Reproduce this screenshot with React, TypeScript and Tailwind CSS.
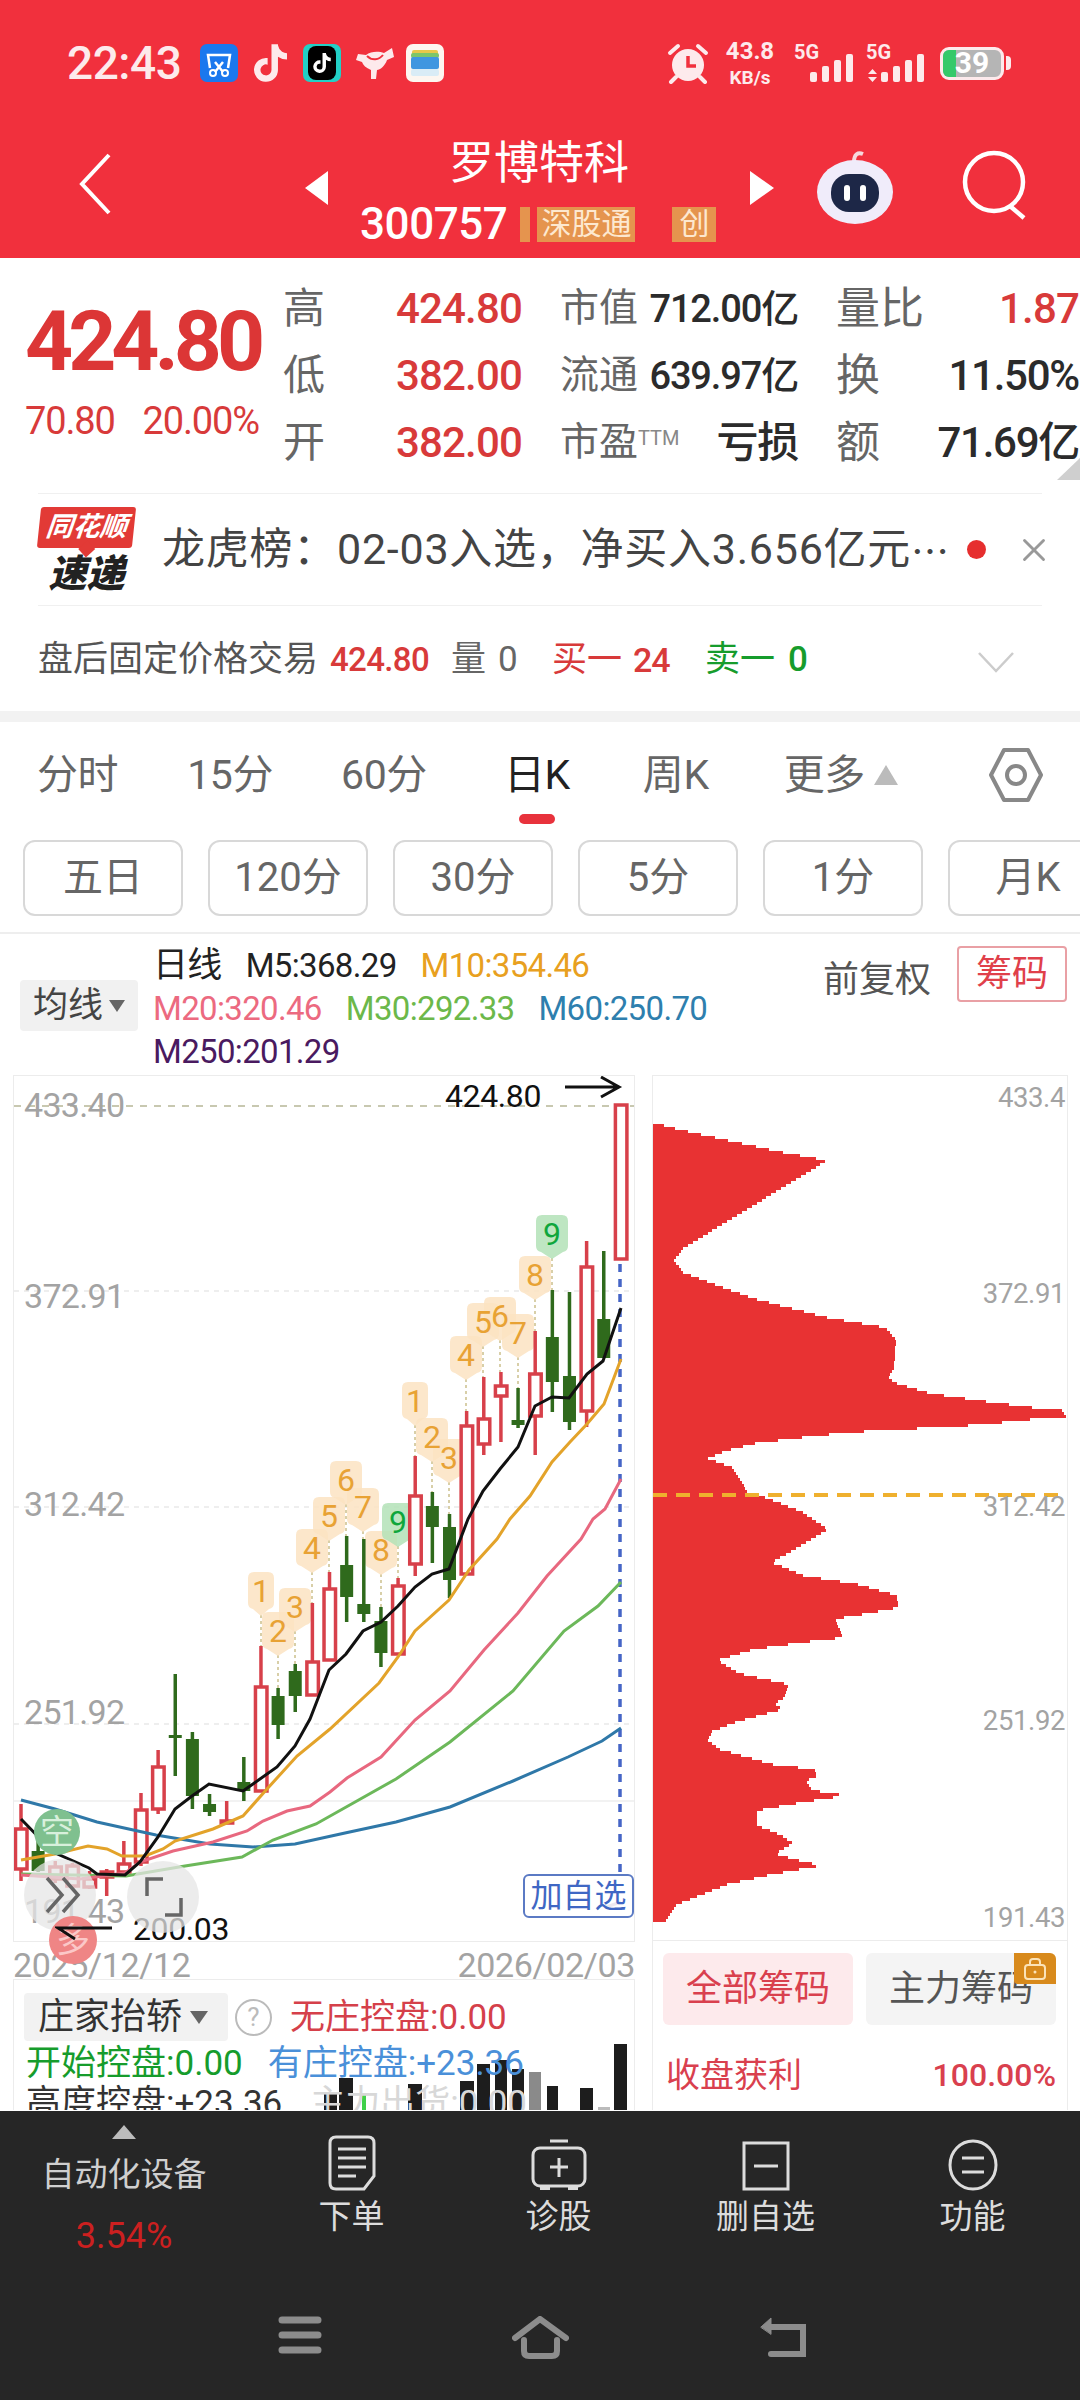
import React from 'react';
import { X } from 'lucide-react';
import { FaTiktok } from 'react-icons/fa6';

type Candle = { hi: number; lo: number; top: number; bot: number; up: boolean };

// hi, lo, body top, body bottom, all in page pixels
const candles: Candle[] = [
  { hi: 1805, lo: 1882, top: 1830, bot: 1870, up: true },
  { hi: 1842, lo: 1873, top: 1852, bot: 1872, up: false },
  { hi: 1862, lo: 1884, top: 1868, bot: 1880, up: true },
  { hi: 1864, lo: 1890, top: 1867, bot: 1887, up: true },
  { hi: 1872, lo: 1890, top: 1880, bot: 1888, up: true },
  { hi: 1870, lo: 1897, top: 1873, bot: 1878, up: true },
  { hi: 1842, lo: 1873, top: 1865, bot: 1873, up: true },
  { hi: 1794, lo: 1867, top: 1811, bot: 1863, up: true },
  { hi: 1751, lo: 1815, top: 1768, bot: 1810, up: true },
  { hi: 1675, lo: 1777, top: 1736, bot: 1739, up: false },
  { hi: 1733, lo: 1810, top: 1740, bot: 1797, up: false },
  { hi: 1795, lo: 1817, top: 1805, bot: 1813, up: false },
  { hi: 1802, lo: 1825, top: 1822, bot: 1824, up: true },
  { hi: 1758, lo: 1802, top: 1783, bot: 1792, up: false },
  { hi: 1647, lo: 1792, top: 1688, bot: 1792, up: true },
  { hi: 1689, lo: 1740, top: 1697, bot: 1726, up: false },
  { hi: 1665, lo: 1713, top: 1672, bot: 1697, up: false },
  { hi: 1604, lo: 1696, top: 1663, bot: 1696, up: true },
  { hi: 1573, lo: 1661, top: 1590, bot: 1661, up: true },
  { hi: 1537, lo: 1623, top: 1566, bot: 1598, up: false },
  { hi: 1540, lo: 1623, top: 1605, bot: 1615, up: false },
  { hi: 1608, lo: 1668, top: 1622, bot: 1654, up: false },
  { hi: 1579, lo: 1655, top: 1587, bot: 1655, up: true },
  { hi: 1457, lo: 1577, top: 1497, bot: 1565, up: true },
  { hi: 1493, lo: 1564, top: 1507, bot: 1528, up: false },
  { hi: 1515, lo: 1599, top: 1528, bot: 1581, up: false },
  { hi: 1412, lo: 1575, top: 1427, bot: 1575, up: true },
  { hi: 1378, lo: 1456, top: 1420, bot: 1445, up: true },
  { hi: 1373, lo: 1443, top: 1387, bot: 1397, up: true },
  { hi: 1389, lo: 1429, top: 1421, bot: 1426, up: false },
  { hi: 1332, lo: 1456, top: 1375, bot: 1417, up: true },
  { hi: 1291, lo: 1413, top: 1338, bot: 1383, up: false },
  { hi: 1293, lo: 1431, top: 1377, bot: 1423, up: false },
  { hi: 1242, lo: 1428, top: 1268, bot: 1412, up: true },
  { hi: 1252, lo: 1359, top: 1320, bot: 1359, up: false },
  { hi: 1106, lo: 1260, top: 1106, bot: 1260, up: true },
];

const candleX = (i: number) => 21 + i * 17.14;

const ma5 = '21,1820 53,1853 89,1869 97,1875 125,1876 140,1863 158,1838 175,1810 192,1797 209,1785 243,1792 277,1768 295,1747 310,1720 329,1671 346,1655 363,1632 381,1623 398,1607 415,1588 432,1575 449,1570 468,1520 483,1492 500,1470 518,1448 535,1407 552,1398 569,1399 587,1375 603,1362 621,1309';
const ma10 = '21,1861 55,1855 88,1847 107,1850 122,1857 145,1857 163,1850 175,1842 213,1830 243,1817 267,1790 297,1757 330,1730 379,1684 398,1658 415,1632 449,1601 469,1571 497,1540 510,1520 530,1497 552,1463 570,1443 587,1425 604,1405 621,1360';
const ma20 = '21,1876 80,1880 125,1874 140,1863 173,1852 213,1843 247,1832 263,1822 287,1812 310,1807 330,1793 347,1779 381,1758 415,1721 450,1692 484,1651 518,1614 547,1577 581,1540 593,1520 605,1510 613,1495 621,1480';
const ma30 = '21,1875 126,1877 185,1867 242,1858 273,1841 316,1825 396,1780 450,1743 513,1692 564,1632 598,1607 621,1583';
const ma60 = '21,1801 55,1810 97,1823 156,1836 210,1845 253,1848 295,1845 345,1834 396,1823 450,1808 513,1782 568,1758 602,1742 621,1729';

// sequence markers sitting above the candles: [digit, centre x, centre y, foot of the dotted leader]
const markers: [number, number, number, number][] = [
  [1, 261, 1592, 1647], [2, 278, 1632, 1689], [3, 295, 1608, 1665], [4, 312, 1549, 1604],
  [5, 329, 1517, 1573], [6, 346, 1481, 1537], [7, 363, 1508, 1540], [8, 381, 1551, 1608],
  [9, 398, 1523, 1579], [1, 415, 1402, 1457], [2, 432, 1438, 1493], [3, 449, 1459, 1515],
  [4, 466, 1356, 1412], [5, 483, 1323, 1378], [6, 500, 1317, 1373], [7, 518, 1334, 1389],
  [8, 535, 1276, 1332], [9, 552, 1235, 1291],
];

// right edge of the chip histogram as [x, y] corners, top to bottom
const chipEdge: [number, number][] = [
  [652, 1122], [683, 1130], [728, 1140], [783, 1152], [827, 1160], [773, 1193], [683, 1248], [674, 1260], [683, 1272],
  [753, 1298], [827, 1317], [885, 1327], [896, 1339], [894, 1368], [888, 1378], [897, 1383], [930, 1393], [993, 1402],
  [1040, 1408], [1062, 1410], [1067, 1417], [1030, 1419], [993, 1423], [943, 1427], [890, 1429], [838, 1433], [793, 1438],
  [755, 1443], [727, 1450], [708, 1458], [732, 1467], [748, 1492], [768, 1498], [803, 1512], [828, 1529], [772, 1562],
  [803, 1575], [858, 1584], [897, 1595], [898, 1607], [852, 1616], [835, 1618], [843, 1637], [802, 1642], [753, 1649],
  [717, 1660], [740, 1673], [788, 1684], [785, 1697], [775, 1703], [782, 1709], [737, 1721], [712, 1731], [708, 1740],
  [720, 1749], [773, 1764], [815, 1769], [816, 1777], [805, 1780], [813, 1790], [846, 1795], [807, 1801], [757, 1810],
  [757, 1825], [780, 1834], [793, 1843], [775, 1853], [795, 1859], [821, 1865], [767, 1875], [727, 1884], [677, 1904],
  [665, 1921],
];

// histogram rows, one whole-pixel bar every 3px, stepped off the edge above
const chipRows: { y: number; w: number }[] = [];
for (let y = 1122; y < 1921; y += 3) {
  let k = 0;
  while (k < chipEdge.length - 2 && chipEdge[k + 1][1] < y) k++;
  const [x0, y0] = chipEdge[k];
  const [x1, y1] = chipEdge[k + 1];
  const x = x0 + ((x1 - x0) * (y - y0)) / (y1 - y0);
  chipRows.push({ y, w: Math.round(x - 653) });
}

// x, width, top of the bar in page pixels
const volumeBars: [number, number, number][] = [
  [324, 13, 2093], [339, 14, 2078], [408, 14, 2084], [460, 14, 2081], [477, 13, 2064],
  [495, 12, 2060], [512, 12, 2069], [529, 12, 2072], [547, 11, 2086], [580, 13, 2088], [614, 13, 2044],
];

function StatusBar() {
  return (
    <div className="flex h-[126px] items-center pl-[67px] text-[#fdeaec]">
      <span className="w-[133px] text-[46px] font-medium leading-none tracking-[-0.01em]">22:43</span>
      <svg width="38" height="38" viewBox="0 0 38 38" className="shrink-0">
        <rect width="38" height="38" rx="7" fill="#1a78ee" />
        <path d="M10 24 L8 11 H30 L28 24" fill="none" stroke="#fff" strokeWidth="2.5" />
        <path d="M15 18 L23 28 M23 18 L15 28" stroke="#fff" strokeWidth="2.5" />
        <circle cx="13" cy="29" r="3" fill="none" stroke="#fff" strokeWidth="2" />
        <circle cx="25" cy="29" r="3" fill="none" stroke="#fff" strokeWidth="2" />
      </svg>
      <FaTiktok className="ml-[16px] h-[40px] w-[33px] shrink-0" />
      <div className="ml-[16px] flex h-[38px] w-[38px] shrink-0 items-center justify-center rounded-[7px] bg-[#22cfc6]">
        <div className="flex h-[34px] w-[28px] items-center justify-center rounded-[8px] bg-black">
          <FaTiktok className="h-[20px] w-[18px] text-white" />
        </div>
      </div>
      <svg width="40" height="36" viewBox="0 0 40 36" className="ml-[14px] shrink-0">
        <path d="M1 15 L3 9 L11 10 C16 6 24 6 29 8 L37 3 L39 12 L32 15 C30 21 25 25 22 25 L21 34 L16 34 L16 25 C11 23 8 20 7 17 Z" fill="#fdeaec" />
        <path d="M12 11 C17 16 24 15 28 10" fill="none" stroke="#f1303d" strokeWidth="2" />
      </svg>
      <svg width="38" height="38" viewBox="0 0 38 38" className="ml-[11px] shrink-0">
        <rect width="38" height="38" rx="7" fill="#fdf6f0" />
        <rect x="6" y="6" width="26" height="5" rx="2" fill="#e8c74a" />
        <rect x="5" y="9" width="28" height="5" rx="2" fill="#7cc66a" />
        <rect x="5" y="13" width="28" height="12" rx="2" fill="#3f96e0" />
        <rect x="5" y="25" width="28" height="7" rx="2" fill="#d9ecf6" />
      </svg>

      <svg width="42" height="42" viewBox="0 0 42 42" className="ml-[223px] shrink-0">
        <circle cx="21" cy="23" r="16" fill="#fdeaec" />
        <path d="M21 14 V24 H29" fill="none" stroke="#f1303d" strokeWidth="3.500" />
        <path d="M3 11 L11 4 M39 11 L31 4" stroke="#fdeaec" strokeWidth="4" strokeLinecap="round" />
        <path d="M9 35 L4 40 M33 35 L38 40" stroke="#fdeaec" strokeWidth="4" strokeLinecap="round" />
      </svg>
      <div className="ml-[16px] flex w-[50px] flex-col items-center font-bold leading-none">
        <span className="text-[24px]">43.8</span>
        <span className="mt-[5px] text-[19px]">KB/s</span>
      </div>
      <div className="relative ml-[19px] h-[42px] w-[60px]">
        <span className="absolute left-0 top-0 text-[20px] font-bold leading-none">5G</span>
        <svg width="44" height="28" viewBox="0 0 44 28" className="absolute left-[16px] top-[12px]" fill="currentColor">
          <rect x="0" y="18" width="7" height="10" rx="2" />
          <rect x="12" y="12" width="7" height="16" rx="2" />
          <rect x="24" y="6" width="7" height="22" rx="2" />
          <rect x="36" y="0" width="7" height="28" rx="2" />
        </svg>
      </div>
      <div className="relative ml-[12px] h-[42px] w-[62px]">
        <span className="absolute left-0 top-0 text-[20px] font-bold leading-none">5G</span>
        <svg width="60" height="28" viewBox="0 0 60 28" className="absolute left-[2px] top-[12px]" fill="currentColor">
          <path d="M4.500 15 L9 20 H0 Z M4.500 28 L0 23 H9 Z" />
          <rect x="13" y="18" width="7" height="10" rx="2" />
          <rect x="25" y="12" width="7" height="16" rx="2" />
          <rect x="37" y="6" width="7" height="22" rx="2" />
          <rect x="49" y="0" width="7" height="28" rx="2" />
        </svg>
      </div>
      <div className="relative ml-[12px] flex h-[33px] w-[64px] items-center justify-center overflow-hidden rounded-[9px] border-[3px] border-[#fdeaec] bg-[#b5b5b5]">
        <div className="absolute inset-y-0 left-0 w-[13px] bg-[#35c96a]" />
        <span className="relative text-[30px] font-bold leading-none text-white">39</span>
      </div>
      <div className="ml-[2px] h-[14px] w-[5px] rounded-r-[4px] bg-[#fdeaec]" />
    </div>
  );
}

function TitleBar() {
  return (
    <div className="flex h-[132px] items-center text-white">
      <svg width="34" height="62" viewBox="0 0 34 62" className="ml-[78px] shrink-0 -translate-y-[8px]">
        <path d="M31 2 L4 31 L31 60" fill="none" stroke="#fff" strokeWidth="4" />
      </svg>
      <svg width="23" height="34" viewBox="0 0 23 34" className="ml-[193px] shrink-0 -translate-y-[4px]">
        <path d="M23 0 V34 L0 17 Z" fill="#fff" />
      </svg>
      <div className="flex w-[422px] flex-col items-center">
        <span className="-translate-y-[3px] text-[45px] leading-[50px]">罗博特科</span>
        <div className="mt-[14px] flex h-[36px] items-center self-start pl-[32px]">
          <span className="text-[44px] font-medium leading-none tracking-[-0.01em]">300757</span>
          <span className="ml-[13px] h-[35px] w-[10px] bg-[#e5944e]" />
          <span className="ml-[7px] flex h-[35px] w-[98px] items-center justify-center bg-[#e5944e] text-[30px] leading-none text-[#fde8d0]">深股通</span>
          <span className="ml-[37px] flex h-[35px] w-[44px] items-center justify-center bg-[#e5944e] text-[30px] leading-none text-[#fde8d0]">创</span>
        </div>
      </div>
      <svg width="24" height="34" viewBox="0 0 24 34" className="shrink-0 -translate-y-[4px]">
        <path d="M0 0 V34 L24 17 Z" fill="#fff" />
      </svg>
      <svg width="82" height="76" viewBox="0 0 82 76" className="ml-[40px] shrink-0 -translate-y-[6px]">
        <path d="M40 14 C40 6 44 4 49 6" fill="none" stroke="#f6d8dc" strokeWidth="4" />
        <ellipse cx="41" cy="44" rx="38" ry="32" fill="#f0ecfa" />
        <rect x="17" y="26" width="48" height="38" rx="18" fill="#1d2747" />
        <rect x="30" y="37" width="6" height="16" rx="3" fill="#fff" />
        <rect x="46" y="37" width="6" height="16" rx="3" fill="#fff" />
      </svg>
      <svg width="70" height="70" viewBox="0 0 70 70" className="ml-[66px] shrink-0 -translate-y-[7px]">
        <circle cx="32" cy="32" r="29" fill="none" stroke="#fff" strokeWidth="4.500" />
        <path d="M48 56 L62 68" stroke="#fff" strokeWidth="4.500" />
      </svg>
    </div>
  );
}

function QuoteCell({ label, value, labelClass, valueClass }: { label: React.ReactNode; value: string; labelClass: string; valueClass: string }) {
  return (
    <div className="flex items-center justify-between whitespace-nowrap">
      <span className={labelClass}>{label}</span>
      <span className={valueClass}>{value}</span>
    </div>
  );
}

const labelOne = 'text-[42px] leading-none text-[#666]';
const labelTwo = 'text-[39px] leading-none text-[#666]';
const labelThree = 'text-[44px] leading-none text-[#666]';
const redValue = 'text-[42px] font-medium leading-none tracking-[-0.02em] text-[#d83a3a]';
const darkValue = 'text-[38px] font-medium leading-none tracking-[-0.03em] text-[#2b2b2b]';
const darkWide = 'text-[42px] font-medium leading-none tracking-[-0.03em] text-[#2b2b2b]';

function QuotePanel() {
  return (
    <section className="relative flex h-[235px] bg-white">
      <div className="flex w-[283px] shrink-0 flex-col pl-[25px]">
        <span className="mt-[46px] text-[84px] font-bold leading-[76px] tracking-[-0.06em] text-[#dc3636]">424.80</span>
        <div className="mt-[22px] flex w-[234px] justify-between text-[38px] leading-none tracking-[-0.03em] text-[#d83a3a]">
          <span>70.80</span>
          <span>20.00%</span>
        </div>
      </div>
      <div className="mt-[17px] grid h-[201px] grid-cols-[239px_238px_243px] grid-rows-3 gap-x-[38px]">
        <QuoteCell label="高" value="424.80" labelClass={labelOne} valueClass={redValue} />
        <QuoteCell label="市值" value="712.00亿" labelClass={labelTwo} valueClass={darkValue} />
        <QuoteCell label="量比" value="1.87" labelClass={labelThree} valueClass={redValue} />
        <QuoteCell label="低" value="382.00" labelClass={labelOne} valueClass={redValue} />
        <QuoteCell label="流通" value="639.97亿" labelClass={labelTwo} valueClass={darkValue} />
        <QuoteCell label="换" value="11.50%" labelClass={labelThree} valueClass={darkWide} />
        <QuoteCell label="开" value="382.00" labelClass={labelOne} valueClass={redValue} />
        <QuoteCell
          label={<>市盈<sup className="text-[20px] text-[#888]">TTM</sup></>}
          value="亏损"
          labelClass={labelTwo}
          valueClass={darkWide}
        />
        <QuoteCell label="额" value="71.69亿" labelClass={labelThree} valueClass={darkWide} />
      </div>
      <svg width="25" height="22" viewBox="0 0 25 22" className="absolute bottom-[13px] right-0">
        <path d="M25 0 V22 H2 Z" fill="#cfcfcf" />
      </svg>
    </section>
  );
}

function NewsRow() {
  return (
    <div className="mx-[38px] flex h-[113px] items-center border-y border-[#f0f0f0]">
      <div className="flex w-[97px] shrink-0 flex-col items-center">
        <div className="relative flex h-[41px] w-[95px] -skew-x-6 items-center justify-center rounded-[3px] bg-[#e23a36]">
          <span className="text-[27px] font-bold italic leading-none text-white">同花顺</span>
          <div className="absolute -bottom-[7px] left-[44px] h-[12px] w-[12px] rotate-45 bg-[#e23a36]" />
        </div>
        <span className="mt-[7px] text-[38px] font-black italic leading-none text-[#222]">速递</span>
      </div>
      <span className="ml-[27px] flex w-[785px] items-center whitespace-nowrap text-[43px] leading-none tracking-[0.75px] text-[#444]">
        龙虎榜：02-03入选，净买入3.656亿元
        <span className="font-['Noto_Sans_CJK_SC'] text-[38px]" lang="zh-CN">…</span>
      </span>
      <div className="ml-[20px] h-[19px] w-[19px] shrink-0 rounded-full bg-[#e62e2e]" />
      <X className="ml-[29px] h-[38px] w-[38px] shrink-0 text-[#999]" strokeWidth={1.8} />
    </div>
  );
}

function AfterHoursRow() {
  return (
    <div className="relative flex h-[105px] items-center whitespace-nowrap pl-[38px] pt-[2px] text-[35px] leading-none">
      <span className="text-[#555]">盘后固定价格交易</span>
      <span className="ml-[12px] w-[95px] text-[33px] font-medium tracking-[-0.02em] text-[#d83a3a]">424.80</span>
      <span className="ml-[26px] w-[35px] text-[#666]">量</span>
      <span className="ml-[12px] w-[18px] text-[#666]">0</span>
      <span className="ml-[36px] w-[71px] text-[#d83a3a]">买一</span>
      <span className="ml-[10px] w-[36px] text-[34px] font-medium tracking-[-0.03em] text-[#d83a3a]">24</span>
      <span className="ml-[36px] w-[71px] text-[#169c2c]">卖一</span>
      <span className="ml-[12px] font-medium text-[#169c2c]">0</span>
      <svg width="38" height="22" viewBox="0 0 38 22" className="absolute left-[977px] top-[45px]">
        <path d="M2 2 L19 20 L36 2" fill="none" stroke="#ccc" strokeWidth="2.500" />
      </svg>
    </div>
  );
}

function PeriodTabs() {
  return (
    <div className="relative flex h-[118px] items-center pb-[12px]">
      <div className="flex pl-[37px] text-[41px] leading-none tracking-[-0.01em] text-[#666]">
        <span>分时</span>
        <span className="ml-[69px]">15分</span>
        <span className="ml-[68px]">60分</span>
        <span className="ml-[77px] text-[#222]">日K</span>
        <span className="ml-[73px]">周K</span>
        <span className="ml-[75px]">更多</span>
      </div>
      <div className="ml-[9px] h-0 w-0 border-x-[12px] border-b-[20px] border-x-transparent border-b-[#bbb]" />
      <svg width="54" height="56" viewBox="0 0 54 56" className="ml-auto mr-[37px]">
        <path d="M15 3 H39 L52 28 L39 53 H15 L2 28 Z" fill="none" stroke="#888" strokeWidth="4" strokeLinejoin="round" />
        <circle cx="27" cy="28" r="9" fill="none" stroke="#888" strokeWidth="4" />
      </svg>
      <div className="absolute bottom-[16px] left-[519px] h-[10px] w-[36px] rounded-full bg-[#e8323c]" />
    </div>
  );
}

function RangeButtons() {
  const items = ['五日', '120分', '30分', '5分', '1分', '月K'];
  return (
    <div className="flex h-[94px] gap-[25px] border-b-2 border-[#eeeeee] pl-[23px] pb-[18px]">
      {items.map((t) => (
        <div key={t} className="flex h-[76px] w-[160px] shrink-0 items-center justify-center rounded-[12px] border-2 border-[#d8d8d8] text-[40px] leading-none text-[#666]">
          {t}
        </div>
      ))}
    </div>
  );
}

function LegendRow() {
  return (
    <div className="relative flex h-[141px] items-start whitespace-nowrap">
      <div className="ml-[20px] mt-[46px] flex h-[51px] w-[118px] items-center justify-center gap-[6px] rounded-[4px] bg-[#f1f1f1] text-[35px] leading-none text-[#444]">
        均线
        <div className="h-0 w-0 border-x-[8px] border-t-[12px] border-x-transparent border-t-[#666]" />
      </div>
      <div className="ml-[15px] mt-[10px] flex flex-col text-[33px] leading-[43px] tracking-[-0.02em]">
        <div className="flex gap-[24px] text-[#222]">
          <span className="text-[35px]">日线</span>
          <span>M5:368.29</span>
          <span className="text-[#e8a020]">M10:354.46</span>
        </div>
        <div className="flex gap-[24px]">
          <span className="text-[#ec6a80]">M20:320.46</span>
          <span className="text-[#6cb84a]">M30:292.33</span>
          <span className="text-[#2e7fae]">M60:250.70</span>
        </div>
        <span className="text-[#4a1a60]">M250:201.29</span>
      </div>
      <span className="absolute left-[823px] top-[26px] text-[36px] leading-[40px] text-[#555]">前复权</span>
      <div className="absolute left-[957px] top-[12px] flex h-[56px] w-[110px] items-center justify-center rounded-[4px] border-2 border-[#e9a0a5] text-[36px] leading-none text-[#e0404a]">
        筹码
      </div>
    </div>
  );
}

function Bubble({ n, x, y, foot }: { n: number; x: number; y: number; foot: number }) {
  const half = n === 1 ? 13 : 16;
  return (
    <g>
      <line x1={x} y1={y + 24} x2={x} y2={foot} stroke="#d8cfa8" strokeWidth="2" strokeDasharray="3 3" />
      <path
        d={`M${x - half + 6} ${y - 19} H${x + half - 6} Q${x + half} ${y - 19} ${x + half} ${y - 13} V${y + 12} Q${x + half} ${y + 17} ${x + half - 5} ${y + 18} L${x} ${y + 25} L${x - half + 5} ${y + 18} Q${x - half} ${y + 17} ${x - half} ${y + 12} V${y - 13} Q${x - half} ${y - 19} ${x - half + 6} ${y - 19} Z`}
        fill={n === 9 ? '#b3e2b7' : '#fce3c2'}
        fillOpacity={0.85}
      />
    </g>
  );
}

function KLineChart() {
  return (
    <svg width="620" height="865" viewBox="14 1077 620 865" className="block overflow-hidden">
      <line x1="14" y1="1107" x2="634" y2="1107" stroke="#c8c8b0" strokeWidth="2" strokeDasharray="7 7" />
      {[1292, 1508, 1725].map((y) => (
        <line key={y} x1="14" y1={y} x2="634" y2={y} stroke="#eeeeee" strokeWidth="2" strokeDasharray="5 5" />
      ))}
      <line x1="14" y1="1802" x2="634" y2="1802" stroke="#f2f2f2" strokeWidth="2" />
      {[['433.40', 1118], ['372.91', 1309], ['312.42', 1517], ['251.92', 1725], ['191.43', 1924]].map(([t, y]) => (
        <text key={t} x="24" y={y} fontSize="34" letterSpacing="-0.7" fill="#a3a3a3">{t}</text>
      ))}

      {markers.map(([n, x, y, foot], i) => (
        <Bubble key={i} n={n} x={x} y={y} foot={foot} />
      ))}
      {markers.map(([n, x, y], i) => (
        <text key={i} x={x} y={y + 11} textAnchor="middle" fontSize="32" fill={n === 9 ? '#0fa63c' : '#e8a234'}>{n}</text>
      ))}

      {candles.map((c, i) => {
        const x = candleX(i);
        const color = c.up ? '#d7404a' : '#2f6a1c';
        return (
          <g key={i}>
            <line x1={x} y1={c.hi} x2={x} y2={c.lo} stroke={color} strokeWidth="3.500" />
            {c.up ? (
              <rect x={x - 5.5} y={c.top} width="11.500" height={c.bot - c.top} fill="#fff" stroke={color} strokeWidth="3.500" />
            ) : (
              <rect x={x - 6.5} y={c.top} width="13" height={c.bot - c.top} fill={color} />
            )}
          </g>
        );
      })}

      <line x1="620" y1="1265" x2="620" y2="1875" stroke="#4565c6" strokeWidth="3.500" strokeDasharray="8 7" />
      <polyline points={ma60} fill="none" stroke="#2f78a8" strokeWidth="3" />
      <polyline points={ma30} fill="none" stroke="#6cb85a" strokeWidth="3" />
      <polyline points={ma20} fill="none" stroke="#e8687f" strokeWidth="3" />
      <polyline points={ma10} fill="none" stroke="#e3a32a" strokeWidth="3" />
      <polyline points={ma5} fill="none" stroke="#111" strokeWidth="3" />
      <path d="M606 1908 L621 1903" stroke="#4a1a60" strokeWidth="3" />

      <text x="445" y="1108" fontSize="32" letterSpacing="-0.4" fill="#111">424.80</text>
      <path d="M565 1088 H619 M601 1078 L619 1088 L601 1098" fill="none" stroke="#111" strokeWidth="3" />
      <text x="133" y="1941" fontSize="32" letterSpacing="-0.4" fill="#111">200.03</text>
    </svg>
  );
}

function ChartOverlays() {
  return (
    <>
      <div className="absolute left-[20px] top-[733px] flex h-[46px] w-[46px] items-center justify-center rounded-full bg-[#7fc08f] text-[34px] leading-none text-[#d8f0dc]">空</div>
      <div className="absolute left-[10px] top-[783px] h-[72px] w-[72px] rounded-full bg-[#e6e6e6]/75" />
      <div className="absolute left-[113px] top-[785px] h-[72px] w-[72px] rounded-full bg-[#e6e6e6]/75" />
      <svg width="40" height="40" viewBox="0 0 40 40" className="absolute left-[30px] top-[799px]">
        <path d="M3 3 L18 20 L3 37 M19 3 L34 20 L19 37" fill="none" stroke="#666" strokeWidth="3.500" />
      </svg>
      <svg width="40" height="40" viewBox="0 0 40 40" className="absolute left-[130px] top-[801px]">
        <path d="M19 2 H3 V19 M21 38 H37 V21" fill="none" stroke="#666" strokeWidth="3.500" />
      </svg>
      <div className="absolute left-[35px] top-[840px] flex h-[48px] w-[48px] items-center justify-center rounded-full bg-[#ef8585] text-[34px] leading-none text-[#fbc8c8]">多</div>
      <svg width="58" height="18" viewBox="0 0 58 18" className="absolute left-[41px] top-[847px]">
        <path d="M57 5 H3 L20 16" fill="none" stroke="#111" strokeWidth="2.800" />
      </svg>
      <div className="absolute left-[509px] top-[798px] flex h-[44px] w-[111px] items-center justify-center rounded-[6px] border-2 border-[#5b7ac4] bg-white/90 text-[32px] leading-none text-[#3f67c4]">
        加自选
      </div>
    </>
  );
}

function IndicatorPanel() {
  return (
    <div className="relative h-[131px] w-[622px] overflow-hidden border-x border-t border-[#ececec] whitespace-nowrap text-[35px] leading-none">
      <svg width="620" height="131" viewBox="14 1980 620 131" className="absolute left-0 top-0">
        {volumeBars.map(([x, w, top], i) => (
          <rect key={i} x={x} y={top} width={w} height={2111 - top} fill={x === 529 ? '#8a8a8a' : '#1d1d1d'} />
        ))}
        <rect x="362" y="2095" width="4" height="16" fill="#3fd04a" />
        <rect x="598" y="2107" width="12" height="4" fill="#bbb" />
      </svg>
      <div className="relative flex h-[48px] items-center pl-[10px] pt-[13px] box-content">
        <div className="flex h-[48px] w-[204px] items-center gap-[8px] rounded-[4px] bg-[#f2f2f2] pl-[14px] text-[36px] text-[#333]">
          庄家抬轿
          <div className="h-0 w-0 border-x-[9px] border-t-[13px] border-x-transparent border-t-[#666]" />
        </div>
        <div className="ml-[7px] flex h-[37px] w-[37px] items-center justify-center rounded-full border-2 border-[#bbb] text-[26px] text-[#bbb]">?</div>
        <span className="ml-[18px] text-[#d5404a]">无庄控盘:0.00</span>
      </div>
      <div className="relative mt-[2px] flex h-[40px] items-center pl-[12px]">
        <span className="text-[#169c2c]">开始控盘:0.00</span>
        <span className="ml-[25px] text-[#4a90d9]">有庄控盘:+23.36</span>
      </div>
      <div className="relative flex h-[40px] items-center pl-[12px]">
        <span className="text-[#333]">高度控盘:+23.36</span>
        <span className="ml-[28px] text-[#d8d8d8]">主力出货:0.00</span>
      </div>
    </div>
  );
}

function ChipChart() {
  return (
    <svg width="414" height="865" viewBox="653 1077 414 865" className="block">
      {chipRows.map((r) => (
        <rect key={r.y} x="653" y={r.y} width={r.w} height="3" fill="#e83233" shapeRendering="crispEdges" />
      ))}
      <line x1="653" y1="1496" x2="1063" y2="1496" stroke="#efb02e" strokeWidth="4" strokeDasharray="14 9" />
      {[['433.4', 1108], ['372.91', 1304], ['312.42', 1517], ['251.92', 1731], ['191.43', 1928]].map(([t, y]) => (
        <text key={t} x="1065" y={y} textAnchor="end" fontSize="27.500" letterSpacing="-0.4" fill="#a3a3a3">{t}</text>
      ))}
    </svg>
  );
}

function ChipPanel() {
  return (
    <div className="ml-[17px] flex h-[1035px] w-[416px] flex-col border-x border-[#ececec]">
      <div className="h-[866px] border-y border-[#ececec]">
        <ChipChart />
      </div>
      <div className="mt-[12px] flex gap-[13px] px-[10px] text-[36px] leading-none">
        <div className="flex h-[72px] w-[190px] items-center justify-center rounded-[6px] bg-[#fdeaec] text-[#d9404e]">全部筹码</div>
        <div className="relative flex h-[72px] w-[190px] items-center justify-center rounded-[6px] bg-[#f4f4f4] text-[#555]">
          主力筹码
          <div className="absolute right-0 top-0 flex h-[31px] w-[42px] items-center justify-center rounded-bl-[4px] rounded-tr-[6px] bg-[#d88a1c]">
            <svg width="24" height="24" viewBox="0 0 24 24">
              <path d="M7 8 V5 Q7 2 10 2 H14 Q17 2 17 5 V8" fill="none" stroke="#fbe3b8" strokeWidth="2" />
              <rect x="2" y="8" width="20" height="14" rx="3" fill="none" stroke="#fbe3b8" strokeWidth="2" />
              <circle cx="12" cy="15" r="1.500" fill="#fbe3b8" />
            </svg>
          </div>
        </div>
      </div>
      <div className="mt-[33px] flex items-center justify-between pl-[13px] pr-[11px] text-[#d9404e]">
        <span className="text-[34px] leading-none">收盘获利</span>
        <span className="text-[32px] font-medium leading-none">100.00%</span>
      </div>
    </div>
  );
}

function BottomItem({ label, children }: { label: string; children: React.ReactNode }) {
  return (
    <div className="flex w-[207px] flex-col items-center">
      <div className="flex h-[80px] items-end">{children}</div>
      <span className="mt-[9px] text-[33px] leading-none text-[#dcdcdc]">{label}</span>
    </div>
  );
}

function BottomBar() {
  return (
    <footer className="flex h-[289px] flex-col bg-[#262626]">
      <div className="flex">
        <div className="flex w-[248px] flex-col items-center">
          <div className="mt-[14px] h-0 w-0 border-x-[12px] border-b-[14px] border-x-transparent border-b-[#bcbcbc]" />
          <span className="mt-[19px] text-[33px] leading-none text-[#cfcfcf]">自动化设备</span>
          <span className="mt-[27px] text-[36px] leading-none text-[#cc2020]">3.54%</span>
        </div>
        <div className="flex">
          <BottomItem label="下单">
            <svg width="48" height="56" viewBox="0 0 48 56" fill="none" stroke="#dcdcdc" strokeWidth="3">
              <path d="M8 2 H40 Q46 2 46 8 V41 L36 54 H8 Q2 54 2 48 V8 Q2 2 8 2 Z" />
              <path d="M10 14 H38 M10 23 H38 M10 32 H38 M10 41 H28" />
            </svg>
          </BottomItem>
          <BottomItem label="诊股">
            <svg width="56" height="52" viewBox="0 0 56 52" fill="none" stroke="#dcdcdc" strokeWidth="3">
              <path d="M19 2 H37" />
              <rect x="2" y="9" width="52" height="38" rx="7" />
              <path d="M28 19 V38 M19 28 H37" />
              <path d="M9 49 H19 M37 49 H47" strokeWidth="4" />
            </svg>
          </BottomItem>
          <BottomItem label="删自选">
            <svg width="48" height="50" viewBox="0 0 48 50" fill="none" stroke="#dcdcdc" strokeWidth="3">
              <rect x="2" y="2" width="44" height="46" />
              <path d="M12 25 H36" />
            </svg>
          </BottomItem>
          <BottomItem label="功能">
            <svg width="50" height="52" viewBox="0 0 50 52" fill="none" stroke="#dcdcdc" strokeWidth="3">
              <ellipse cx="25" cy="26" rx="23" ry="24" />
              <path d="M14 19 H36 M14 33 H36" />
            </svg>
          </BottomItem>
        </div>
      </div>
      <div className="mt-auto flex gap-[190px] pb-[40px] pl-[278px]">
        <svg width="44" height="38" viewBox="0 0 44 38" fill="none" stroke="#8c8c8c" strokeWidth="7" strokeLinecap="round">
          <path d="M4 4 H40 M4 19 H40 M4 34 H40" />
        </svg>
        <svg width="57" height="44" viewBox="0 0 57 44" fill="none" stroke="#8c8c8c" strokeWidth="6" strokeLinecap="round">
          <path d="M3 22 L28 3 L54 22" />
          <path d="M12 24 V35 Q12 40 17 40 H40 Q45 40 45 35 V24" />
        </svg>
        <svg width="48" height="42" viewBox="0 0 48 42" fill="none" stroke="#8c8c8c" strokeWidth="6" strokeLinecap="round">
          <path d="M8 11 H44 V38 H12" />
          <path d="M2 11 L12 2 V18 Z" fill="#8c8c8c" strokeWidth="1" />
        </svg>
      </div>
    </footer>
  );
}

export default function App() {
  return (
    <div className="flex h-[2400px] w-[1080px] flex-col overflow-hidden bg-white font-[Roboto,'Noto_Sans_CJK_SC',sans-serif]">
      <header className="shrink-0 bg-[#f1303d]">
        <StatusBar />
        <TitleBar />
      </header>
      <QuotePanel />
      <NewsRow />
      <AfterHoursRow />
      <div className="h-[11px] shrink-0 bg-[#f2f2f2]" />
      <PeriodTabs />
      <RangeButtons />
      <LegendRow />
      <main className="flex flex-1 overflow-hidden pl-[13px]">
        <div className="flex w-[622px] flex-col">
          <div className="relative z-10 h-[867px] w-[622px] border border-[#ececec]">
            <KLineChart />
            <ChartOverlays />
          </div>
          <div className="flex h-[37px] items-center justify-between pt-[8px] text-[34px] leading-none tracking-[-0.01em] text-[#a3a3a3]">
            <span>2025/12/12</span>
            <span>2026/02/03</span>
          </div>
          <IndicatorPanel />
        </div>
        <ChipPanel />
      </main>
      <BottomBar />
    </div>
  );
}
